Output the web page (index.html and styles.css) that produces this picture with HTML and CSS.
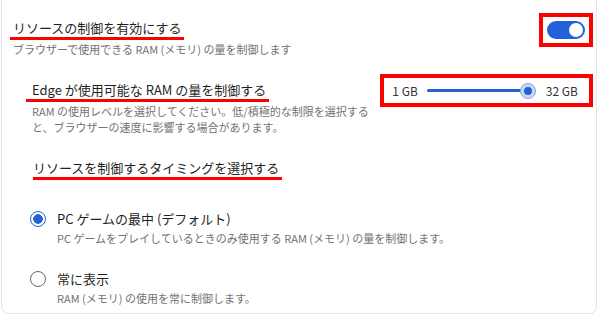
FILE: index.html
```html
<!DOCTYPE html>
<html lang="ja">
<head>
    <meta charset="UTF-8">
    <meta name="viewport" content="width=device-width, initial-scale=1.0">
    <title>リソースの制御</title>
    <link rel="stylesheet" href="styles.css">
</head>
<body>
    <div class="card">
        <!-- Main toggle -->
        <div class="row">
            <div class="text text-top">
                <div class="title"><span class="mark mark-main">リソースの制御を有効にする</span></div>
                <div class="desc">ブラウザーで使用できる RAM (メモリ) の量を制御します</div>
            </div>
            <div class="box">
                <span class="toggle"><span class="knob"></span></span>
            </div>
        </div>

        <!-- RAM limit -->
        <div class="row sub ram-row">
            <div class="text text-ram">
                <div class="title"><span class="mark mark-ram">Edge が使用可能な RAM の量を制御する</span></div>
                <div class="desc">RAM の使用レベルを選択してください。低/積極的な制限を選択すると、ブラウザーの速度に影響する場合があります。</div>
            </div>
            <div class="box box-slider">
                <span class="gb">1 GB</span>
                <span class="slider">
                    <span class="track"></span>
                    <span class="thumb"><span class="dot"></span></span>
                </span>
                <span class="gb">32 GB</span>
            </div>
        </div>

        <!-- Timing -->
        <div class="sub timing">
            <div class="title"><span class="mark mark-timing">リソースを制御するタイミングを選択する</span></div>

            <div class="option option-first">
                <span class="radio checked"></span>
                <div class="option-text">
                    <div class="label">PC ゲームの最中 (デフォルト)</div>
                    <div class="desc">PC ゲームをプレイしているときのみ使用する RAM (メモリ) の量を制御します。</div>
                </div>
            </div>

            <div class="option">
                <span class="radio"></span>
                <div class="option-text">
                    <div class="label">常に表示</div>
                    <div class="desc">RAM (メモリ) の使用を常に制御します。</div>
                </div>
            </div>
        </div>
    </div>
</body>
</html>
```

FILE: styles.css
```css
body {
    margin: 0;
    background: #fff;
    font-family: "Noto Sans CJK JP", "Noto Sans", sans-serif;
    color: #1f1f1f;
}
.card {
    margin: 0 3px 0 1px;
    padding: 13px 3px 7px 11px;
    height: 293px;
    border: 1px solid #e5e5e5;
    border-top: none;
    border-radius: 0 0 8px 8px;
}
.row {
    display: flex;
    justify-content: space-between;
    align-items: flex-start;
}
.text-top {
    margin-top: 7px;
}
.title {
    font-size: 13px;
    line-height: 16px;
}
.mark {
    display: inline-block;
    padding: 0 3px 1px 0;
    border-bottom: 3px solid #f00;
}
.mark-main {
    margin-left: -3px;
    padding-left: 3px;
}
.mark-ram {
    margin-left: -6px;
    padding-left: 6px;
}
.mark-timing {
    margin-left: 1px;
}
.desc {
    margin-top: 1px;
    font-size: 11px;
    line-height: 16px;
    color: #727272;
}
.box {
    display: flex;
    align-items: center;
    padding: 4px;
    border: 4px solid #f00;
}
.toggle {
    position: relative;
    width: 38px;
    height: 18px;
    border-radius: 9px;
    background: #2361d8;
}
.knob {
    position: absolute;
    top: 2px;
    right: 2px;
    width: 14px;
    height: 14px;
    border-radius: 50%;
    background: #fff;
}
.sub {
    margin-left: 19px;
}
.ram-row {
    margin-top: 17px;
}
.text-ram {
    width: 348px;
    margin-top: 8px;
}
.box-slider {
    height: 25px;
    padding: 0 11px 0 8px;
    font-size: 12px;
    color: #333;
}
.slider {
    display: flex;
    align-items: center;
    width: 109px;
    margin: 0 10px 0 9px;
}
.track {
    flex: 1;
    height: 3px;
    margin-right: -2px;
    border-radius: 2px;
    background: #2361d8;
}
.thumb {
    display: flex;
    align-items: center;
    justify-content: center;
    width: 14px;
    height: 14px;
    border: 1px solid #84a3e0;
    border-radius: 50%;
    background: #cbd8f3;
}
.dot {
    width: 8px;
    height: 8px;
    border-radius: 50%;
    background: #2361d8;
}
.timing {
    margin-top: 25px;
}
.option {
    display: flex;
    align-items: flex-start;
    gap: 11px;
    margin: 24px 0 0 -2px;
}
.option-first {
    margin-top: 30px;
}
.radio {
    box-sizing: border-box;
    width: 16px;
    height: 16px;
    margin-top: 1px;
    border: 1.5px solid #666;
    border-radius: 50%;
    background: #fff;
}
.radio.checked {
    border-color: #2361d8;
    background: radial-gradient(circle, #2361d8 0 4.5px, #fff 5px);
}
.label {
    font-size: 13px;
    line-height: 18px;
}
.option-text .desc {
    margin-top: 2px;
}
```
